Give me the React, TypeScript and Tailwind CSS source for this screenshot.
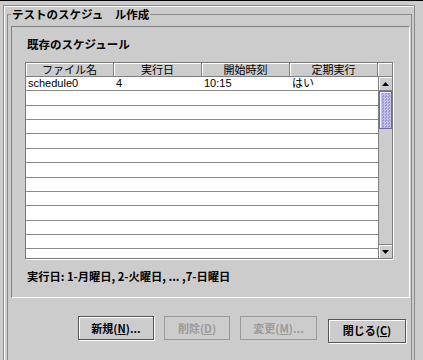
const jp = "font-['Noto_Sans_CJK_JP',sans-serif]";
const latin = "font-['Liberation_Sans','Noto_Sans_CJK_JP',sans-serif]";

const columns = ['ファイル名', '実行日', '開始時刻', '定期実行'];
const rows = [['schedule0', '4', '10:15', 'はい']];
const rowCount = 13;

const Arrow = ({ down }: { down?: boolean }) => (
  <svg width="7" height="4" viewBox="0 0 7 4">
    <polygon points={down ? '0,0 7,0 3.5,4' : '3.5,0 7,4 0,4'} fill="#000" />
  </svg>
);

const ScrollBar = () => (
  <div className="w-[14px] flex flex-col bg-[#cccccc] border-l border-[#808080]">
    <div className="h-[14px] flex items-center justify-center border-b border-[#808080] shadow-[inset_1px_1px_0_#fff]">
      <Arrow />
    </div>
    <div className="h-[38px] border border-[#6b6ba8] bg-[#c4c4ee] bg-[repeating-conic-gradient(#c4c4ee_0_25%,#9a9ad0_0_50%)] bg-[length:3px_3px] shadow-[inset_1px_1px_0_#eef]" />
    <div className="flex-1" />
    <div className="h-[14px] flex items-center justify-center border-t border-[#808080] shadow-[inset_1px_1px_0_#fff]">
      <Arrow down />
    </div>
  </div>
);

const Button = ({
  label,
  mnemonic,
  suffix,
  width,
  disabled,
}: {
  label: string;
  mnemonic: string;
  suffix?: string;
  width: string;
  disabled?: boolean;
}) => (
  <button
    className={`${width} h-[24px] border text-[11px] font-bold leading-none ${
      disabled
        ? 'border-[#9a9a9a] text-[#9a9a9a]'
        : 'border-[#555555] text-black shadow-[inset_1px_1px_0_#fff,1px_1px_0_#fff]'
    }`}
  >
    {label}(<span className="underline">{mnemonic}</span>){suffix}
  </button>
);

export default function App() {
  return (
    <div className={`w-[423px] h-[360px] overflow-hidden bg-[#cccccc] border-t border-black text-black ${jp}`}>
      <div className="mt-[4px] ml-[3px] w-[412px] h-[400px] border border-[#8a8a8a] shadow-[inset_1px_1px_0_#fff] pl-[3px] pr-[2px]">
        <fieldset className="border border-[#8a8a8a] pl-[3px] pr-[1px] h-[380px]">
          <legend className="px-[1px] text-[11.5px] font-bold leading-[16px]">テストのスケジュ　ル作成</legend>

          <div className="mt-[4px] h-[272px] border-t border-l border-[#808080] border-b border-r border-b-white border-r-white pl-[13px] flex flex-col">
            <div className="mt-[10px] pl-[2px] text-[11.5px] font-bold leading-[14px]">既存のスケジュール</div>

            {/* テーブル */}
            <div className="mt-[11px] w-[368px] border border-[#7a7a7a] shadow-[1px_1px_0_#fff] flex flex-col">
              <div className="flex h-[14px]">
                {columns.map((col) => (
                  <div
                    key={col}
                    className="w-[88px] border-r border-b border-[#808080] shadow-[inset_1px_1px_0_#fff] text-center text-[11px] leading-[13px]"
                  >
                    {col}
                  </div>
                ))}
                <div className="w-[14px] border-b border-[#808080] shadow-[inset_1px_1px_0_#fff]" />
              </div>
              <div className="flex h-[181px]">
                <div className="w-[352px] bg-white overflow-hidden">
                  {Array.from({ length: rowCount }).map((_, i) => (
                    <div key={i} className={`flex h-[14.36px] border-b border-[#8c8c8c] text-[11px] leading-[13px] ${latin}`}>
                      {columns.map((col, j) => (
                        <div key={col} className="w-[88px] pl-[2px]">
                          {rows[i]?.[j] ?? ''}
                        </div>
                      ))}
                    </div>
                  ))}
                </div>
                <ScrollBar />
              </div>
            </div>

            <div className="mt-[10px] pl-[2px] text-[11.25px] font-bold leading-[14px]">
              実行日: 1-月曜日, 2-火曜日, ... ,7-日曜日
            </div>
          </div>

          <div className="mt-[18px] pr-[4px] flex justify-end gap-[10px]">
            <Button label="新規" mnemonic="N" suffix="..." width="w-[76px]" />
            <Button label="削除" mnemonic="D" width="w-[66px]" disabled />
            <Button label="変更" mnemonic="M" suffix="..." width="w-[77px]" disabled />
            <div className="ml-[1px]">
              <Button label="閉じる" mnemonic="C" width="w-[78px]" />
            </div>
          </div>
        </fieldset>
      </div>
    </div>
  );
}
